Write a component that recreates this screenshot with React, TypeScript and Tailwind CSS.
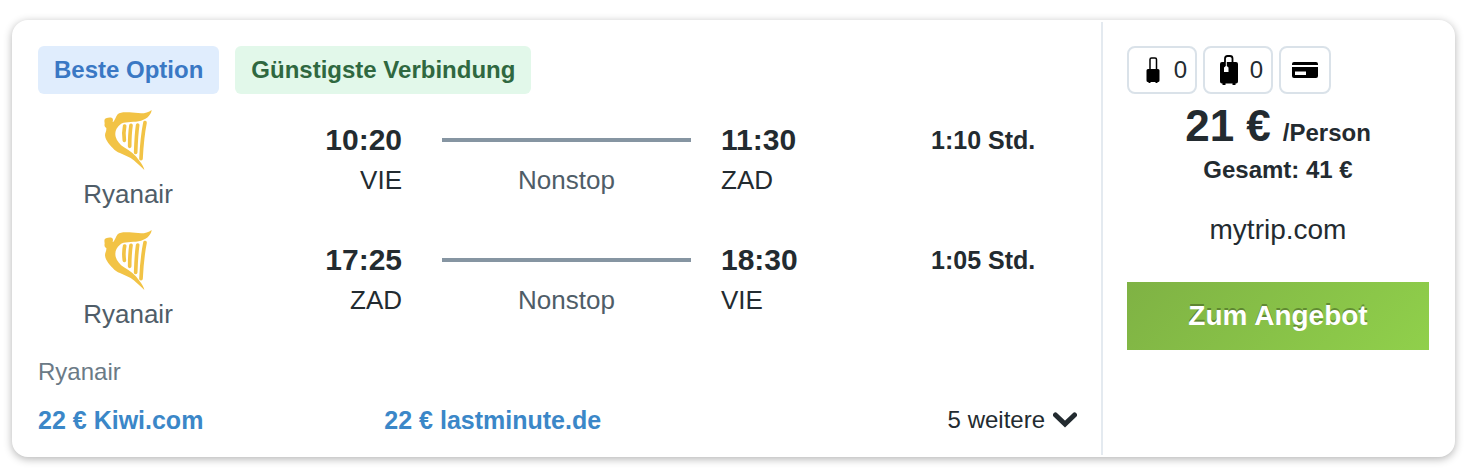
import { useId } from 'react';

interface Leg {
  airline: string;
  departure: string;
  from: string;
  arrival: string;
  to: string;
  stops: string;
  duration: string;
}

const legs: Leg[] = [
  { airline: 'Ryanair', departure: '10:20', from: 'VIE', arrival: '11:30', to: 'ZAD', stops: 'Nonstop', duration: '1:10 Std.' },
  { airline: 'Ryanair', departure: '17:25', from: 'ZAD', arrival: '18:30', to: 'VIE', stops: 'Nonstop', duration: '1:05 Std.' },
];

const offers = [
  { price: '22 €', provider: 'Kiwi.com' },
  { price: '22 €', provider: 'lastminute.de' },
];

function HarpLogo() {
  return (
    <svg viewBox="45 30 142 180" className="h-[60px] w-12" fill="#f2c345" aria-hidden="true">
      <path d="M187 30C185 48 168 60 148 64C126 68 104 64 92 74C80 84 76 96 79 110C82 122 92 134 104 142C122 152 138 164 150 182C158 192 164 202 165 210C150 196 138 184 124 174C108 164 88 160 75 149C63 137 48 122 47 106C47 98 52 94 51 84C45 81 45 76 46 70C45 64 44 57 50 55C57 53 66 51 70 56C73 62 68 64 71 67C77 62 79 50 85 43C92 36 106 36 120 37C144 39 170 45 187 30Z" />
      <g fill="none" stroke="#f2c345" strokeLinecap="round" strokeWidth="11">
        <path d="M106 78C103 92 103 106 105 121" />
        <path d="M125 76C122 96 121 118 121 139" />
        <path d="M145 75C141 102 140 128 139 157" />
        <path d="M167 68C161 98 157 136 155 176" />
      </g>
    </svg>
  );
}

function CabinBagIcon() {
  return (
    <svg viewBox="0 0 14 26" className="h-[26px] w-[18px]" aria-hidden="true">
      <path d="M4 13V2.5Q4 1 5.5 1H9Q10.500 1 10.500 2.5V13" fill="none" stroke="#000" strokeWidth="1.500" />
      <path d="M2 12H12Q13.500 12 13.500 13.500V23.500Q13.500 25 12 25H11.500V26H9.500V25H4.500V26H2.500V25H2Q.5 25 .5 23.500V13.500Q.5 12 2 12Z" />
    </svg>
  );
}

function SuitcaseIcon() {
  return (
    <svg viewBox="0 0 18 30" className="h-[30px] w-[18px]" aria-hidden="true">
      <path d="M5 8V3.500Q5 1 7.500 1H10Q12.500 1 12.500 3.500V8" fill="none" stroke="#000" strokeWidth="1.800" />
      <path d="M2 7H16Q18 7 18 9V26.500Q18 28.500 16 28.500H15.500V30H12.500V28.500H5.500V30H2.500V28.500H2Q0 28.500 0 26.500V9Q0 7 2 7Z" />
      <path d="M6.300 7V11.500" stroke="#fff" strokeWidth="1" />
      <path d="M5.800 11H6.800L8.500 12.500V17H4V12.500Z" fill="#fff" />
    </svg>
  );
}

function CardIcon() {
  return (
    <svg viewBox="0 0 26 16" className="h-4 w-[26px]" aria-hidden="true">
      <path d="M2 0H24Q26 0 26 2V3H0V2Q0 0 2 0ZM0 5H26V14Q26 16 24 16H2Q0 16 0 14ZM3 9.500V13H14V9.500Z" fillRule="evenodd" />
    </svg>
  );
}

function FlightLeg({ leg }: { leg: Leg }) {
  return (
    <li className="grid grid-cols-[180fr_184fr_319fr_210fr_146fr] text-[26px] leading-10">
      <div className="flex flex-col items-center text-[#4f5d68]">
        <HarpLogo />
        <span className="mt-1">{leg.airline}</span>
      </div>
      <div className="mt-2.5 text-right">
        <div className="text-[30px] font-bold">{leg.departure}</div>
        <div>{leg.from}</div>
      </div>
      <div className="mt-2.5 pr-[30px] pl-10 text-center text-[#4f5d68]">
        <div className="flex h-10 items-center">
          <div className="h-1 flex-1 bg-[#8695a2]" />
        </div>
        <div>{leg.stops}</div>
      </div>
      <div className="mt-2.5">
        <div className="text-[30px] font-bold">{leg.arrival}</div>
        <div>{leg.to}</div>
      </div>
      <div className="mt-2.5 text-[25px] font-bold whitespace-nowrap">{leg.duration}</div>
    </li>
  );
}

export default function App() {
  const titleId = useId();

  return (
    <main className="bg-white pt-5 pr-[13px] pb-4 pl-3 font-['Liberation_Sans',Arial,sans-serif] text-[#232b30]">
      <article
        aria-labelledby={titleId}
        className="flex rounded-2xl border-2 border-white bg-white shadow-[0_2px_8px_rgba(0,0,0,0.3)]"
      >
        {/* Verbindung */}
        <div className="flex-1 px-6 pt-6 pb-[15px]">
          <div id={titleId} className="flex gap-4 text-2xl leading-12 font-bold">
            <span className="rounded-md bg-[#e0edfd] px-4 text-[#3a78c4]">Beste Option</span>
            <span className="rounded-md bg-[#e2f8ea] px-4 text-[#2f6840]">Günstigste Verbindung</span>
          </div>

          <ul className="mt-4 flex flex-col gap-4">
            {legs.map((leg) => (
              <FlightLeg key={leg.departure} leg={leg} />
            ))}
          </ul>

          <div className="mt-[18px] text-2xl leading-10 text-[#6b7a86]">Ryanair</div>

          <div className="mt-2 grid grid-cols-3 text-[25px] leading-10">
            {offers.map((offer) => (
              <a key={offer.provider} href="#" className="font-bold text-[#3b87c8]">
                {offer.price} {offer.provider}
              </a>
            ))}
            <button type="button" className="flex items-center justify-end gap-2 text-2xl">
              5 weitere
              <svg viewBox="0 0 24 16" className="h-4 w-6" fill="none" stroke="currentColor" strokeWidth="5" strokeLinecap="round" aria-hidden="true">
                <path d="M2.500 3L12 12L21.500 3" />
              </svg>
            </button>
          </div>
        </div>

        {/* Preis */}
        <div className="w-[352px] border-l-2 border-[#e4eaf0] p-6 text-center">
          <div className="flex gap-1.5 text-2xl [&>div]:flex [&>div]:h-12 [&>div]:items-center [&>div]:rounded-lg [&>div]:border-2 [&>div]:border-[#dae2e9]">
            <div className="w-[70px] justify-end gap-3 pr-2">
              <CabinBagIcon />0
            </div>
            <div className="w-[70px] justify-end gap-3 pr-2">
              <SuitcaseIcon />0
            </div>
            <div className="w-[52px] justify-center">
              <CardIcon />
            </div>
          </div>
          <div className="mt-2 flex items-baseline justify-center gap-3 font-bold">
            <span className="text-[44px] leading-12">21 €</span>
            <span className="text-2xl leading-8">/Person</span>
          </div>
          <div className="text-2xl leading-10 font-bold">Gesamt: 41 €</div>
          <div className="mt-5 text-[28px] leading-10">mytrip.com</div>
          <button
            type="button"
            className="mt-8 h-[68px] w-full bg-linear-135 from-[#7fb244] to-[#90d04b] text-[28px] font-bold text-white [text-shadow:0_-2px_0_rgba(0,0,0,0.3)]"
          >
            Zum Angebot
          </button>
        </div>
      </article>
    </main>
  );
}
